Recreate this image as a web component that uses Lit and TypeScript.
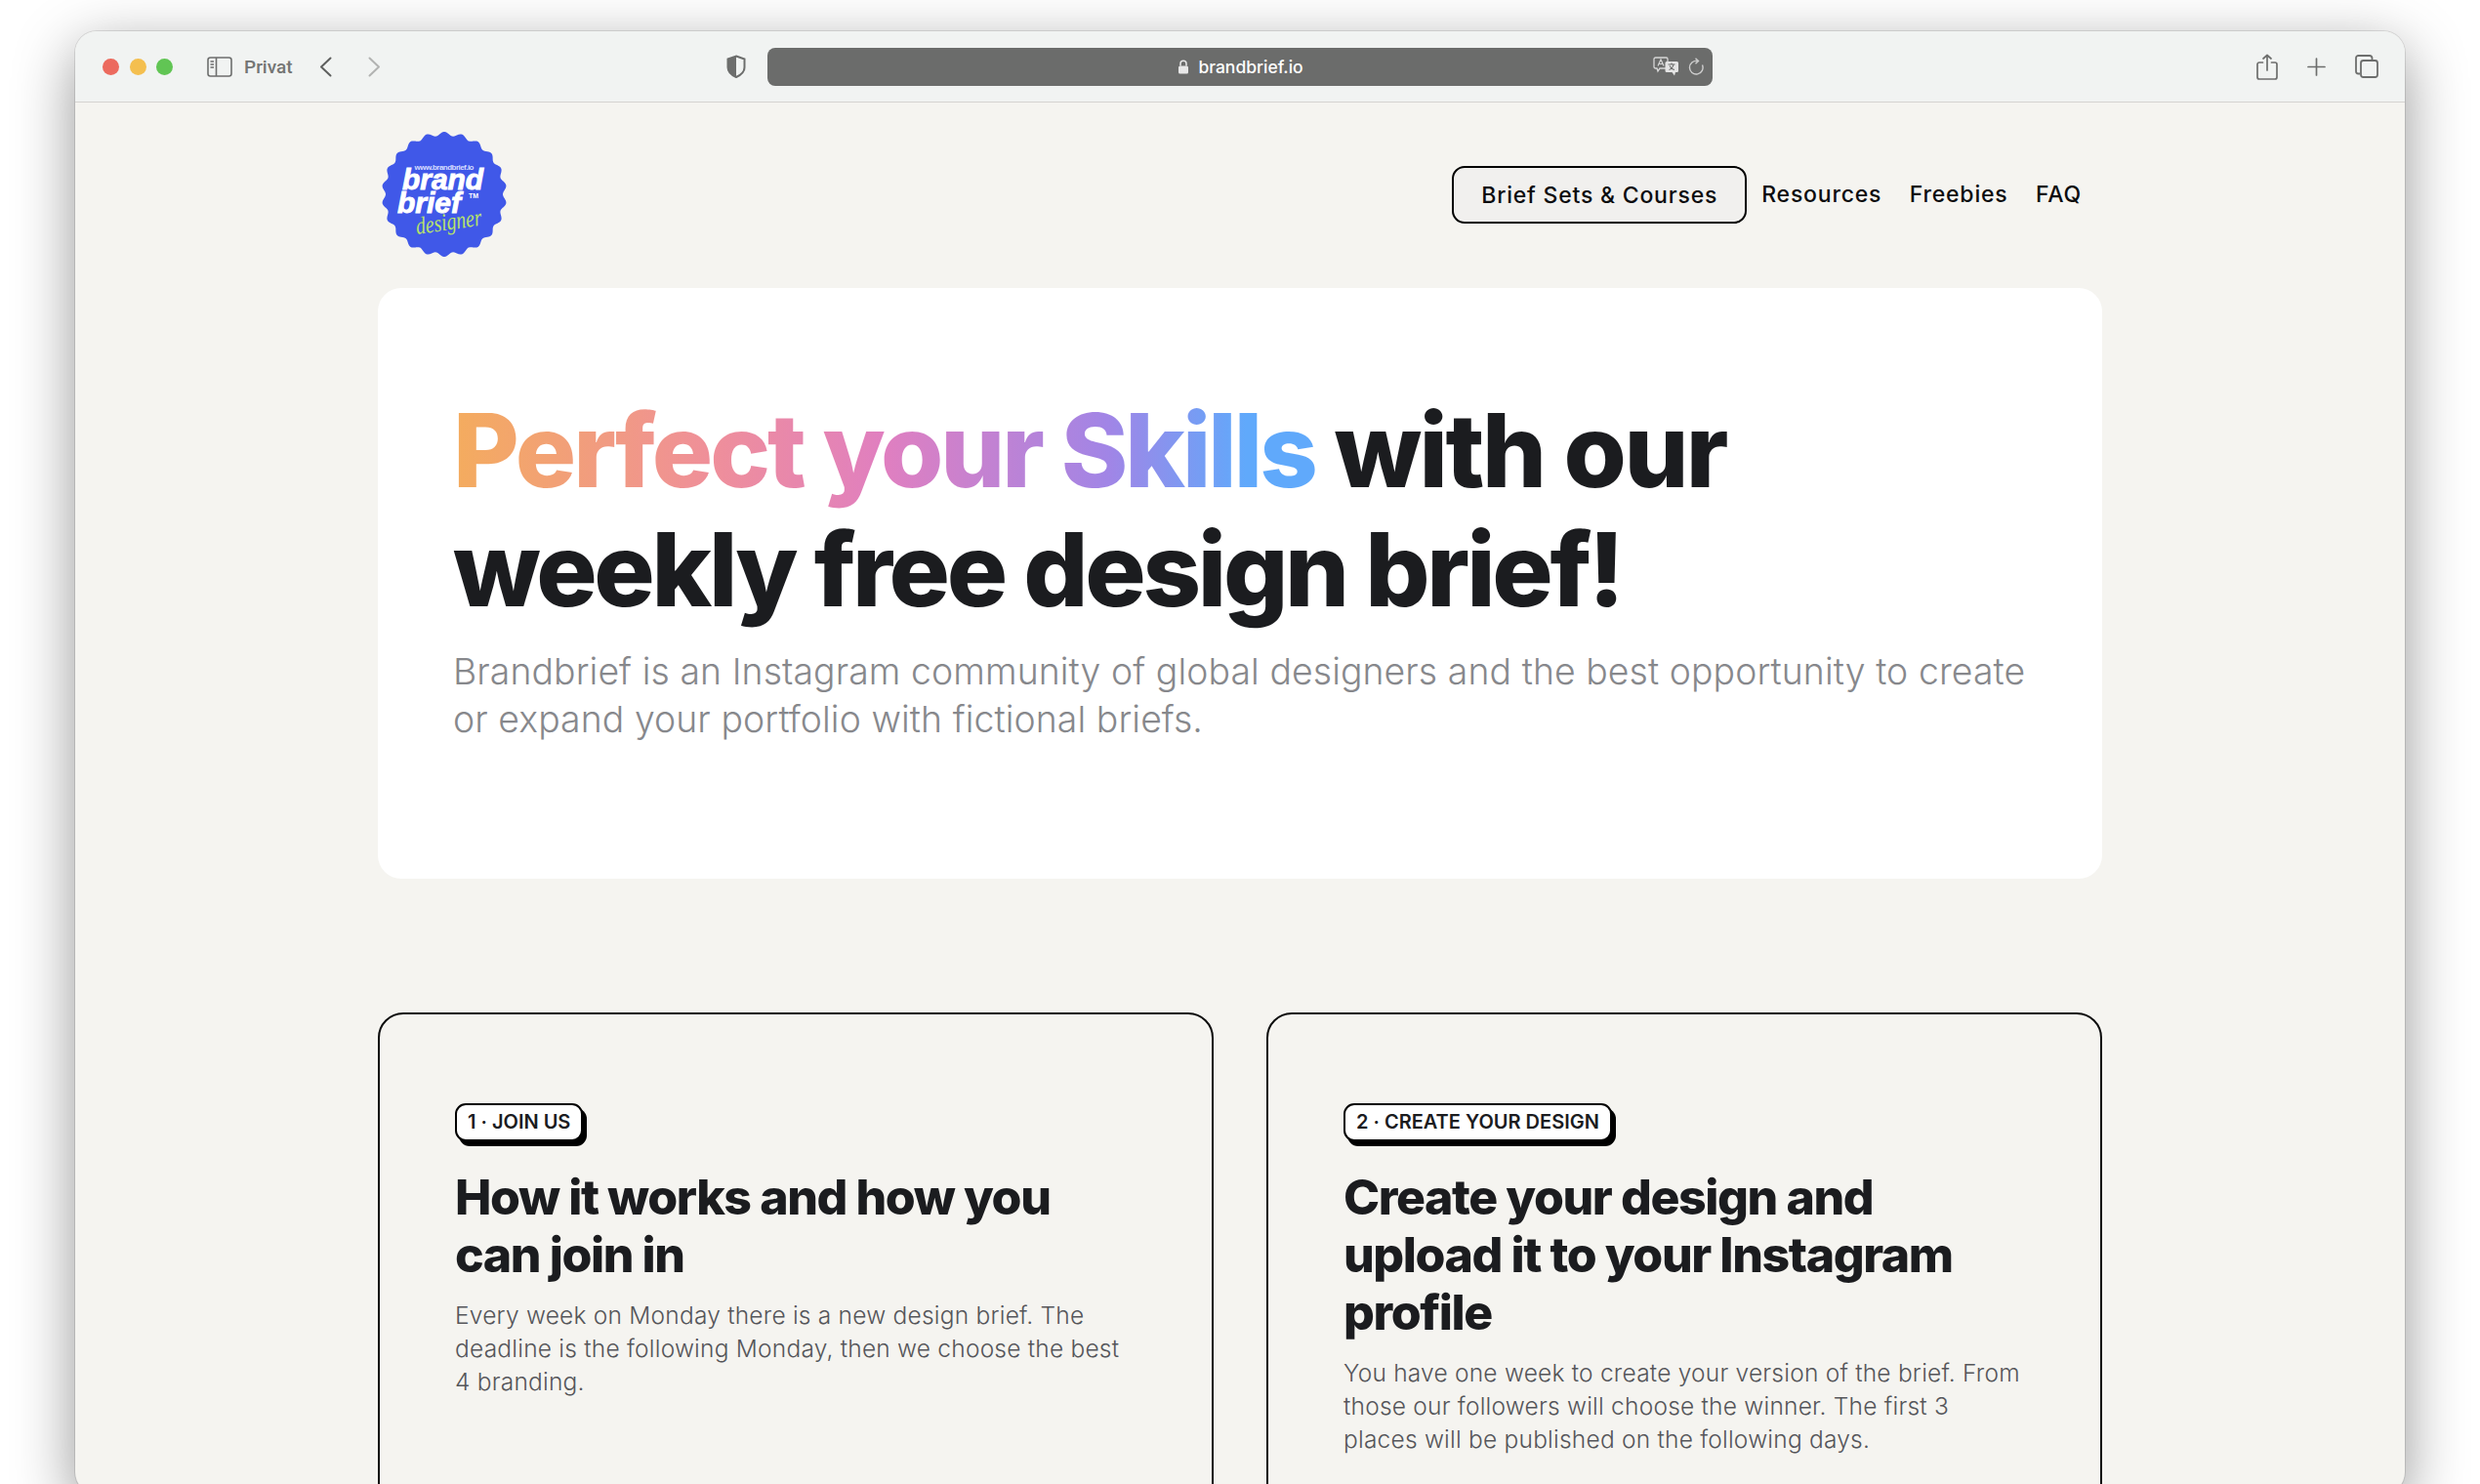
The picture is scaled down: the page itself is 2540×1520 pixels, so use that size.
import { LitElement, html, css, svg } from "lit";
import { customElement } from "lit/decorators.js";

function scallopPath(cx: number, cy: number, r: number, amp: number, n: number) {
  const pts: string[] = [];
  const steps = 720;
  for (let i = 0; i < steps; i++) {
    const t = (i / steps) * Math.PI * 2;
    const rr = r + amp * Math.cos(n * t);
    pts.push(`${(cx + rr * Math.sin(t)).toFixed(2)} ${(cy - rr * Math.cos(t)).toFixed(2)}`);
  }
  return "M" + pts.join("L") + "Z";
}

@customElement("app-root")
export class AppRoot extends LitElement {
  static styles = css`
    :host {
      display: block;
      width: 2540px;
      height: 1520px;
      overflow: hidden;
      background: #fff;
      font-family: Inter, "Liberation Sans", sans-serif;
    }
    .stage { padding: 32px 77px 0 77px; height: 1520px; box-sizing: border-box; }
    .window {
      height: 1498px;
      border-radius: 22px;
      overflow: hidden;
      box-shadow: 0 18px 62px rgba(0,0,0,.42), 0 0 0 1px rgba(0,0,0,.1);
      background: #f5f4f0;
    }
    .toolbar {
      height: 73px;
      box-sizing: border-box;
      background: #f1f3f2;
      border-bottom: 1px solid #d5d3d0;
      display: flex;
      align-items: center;
      padding-left: 28px;
      padding-right: 27px;
      color: #6d6e6d;
    }
    .dot { width: 17px; height: 17px; border-radius: 50%; margin-right: 10.5px; }
    .red { background: #ec6a5e; }
    .yellow { background: #f4bf4f; }
    .green { background: #61c554; }
    .sidebar { margin-left: 24.5px; display: block; }
    .privat { font: 500 19px Roboto, Inter, sans-serif; color: #747574; margin-left: 12px; }
    .back { margin-left: 27px; display: block; }
    .forward { margin-left: 37px; display: block; }
    .shield { margin-left: 354px; display: block; }
    .address {
      margin-left: 22px;
      width: 968px;
      height: 39px;
      background: #6b6c6b;
      border-radius: 8px;
      display: grid;
      grid-template-columns: 1fr auto 1fr;
      align-items: center;
      color: #fff;
      font-size: 17.5px;
      font-weight: 500;
    }
    .url { display: flex; align-items: center; gap: 9px; margin-left: 2px; }
    .addr-right { display: flex; justify-content: flex-end; align-items: center; gap: 9px; padding-right: 9px; }
    .addr-right svg { display: block; }
    .share { margin-left: auto; display: block; }
    .plus { margin-left: 30px; display: block; }
    .tabs { margin-left: 30px; display: block; }

    .content { width: 1766px; margin: 0 auto; }
    .header { height: 190px; display: flex; align-items: flex-start; }
    .logo { display: block; margin-top: 30px; margin-left: 2px; }
    .nav { margin-left: auto; display: flex; align-items: center; margin-top: 65px; padding-right: 21px; font-size: 23px; font-weight: 500; letter-spacing: .8px; color: #0c0c0e; }
    .nav a { margin-left: 28.5px; margin-top: -2px; }
    .nav a.first { margin-left: 15px; }
    .btn {
      width: 302px; height: 59px; box-sizing: border-box;
      border: 2.5px solid #000; border-radius: 13px; background: #f1f0ee;
      display: flex; align-items: center; justify-content: center;
    }
    .hero {
      height: 605px;
      box-sizing: border-box;
      background: #fff;
      border-radius: 24px;
      padding: 105px 77px 0;
    }
    h1 { margin: 0; font-size: 104px; line-height: 122px; font-weight: 800; letter-spacing: -3.03px; color: #1b1c1f; }
    .tight { letter-spacing: -3.3px; }
    .wide { letter-spacing: -2.6px; }
    .grad {
      background: linear-gradient(90deg, #f4ac5e 0%, #ef8f9a 30%, #e07fc0 50%, #a185e6 76%, #60a9fb 92%);
      -webkit-background-clip: text;
      background-clip: text;
      color: transparent;
    }
    .lead { margin: 20px 0 0; font-size: 37.35px; line-height: 48.6px; color: #87888c; font-weight: 300; letter-spacing: .1px; }
    .cards { margin-top: 137px; display: grid; grid-template-columns: 856px 856px; column-gap: 54px; }
    .card {
      height: 600px;
      box-sizing: border-box;
      border: 2.5px solid #0c0c0c;
      border-radius: 26px;
      padding: 91px 76px 0 77px;
    }
    .badge {
      display: inline-block;
      height: 39px;
      line-height: 34px;
      box-sizing: border-box;
      padding: 0 11px;
      background: #fff;
      border: 2.5px solid #000;
      border-radius: 11px;
      box-shadow: 4px 5px 0 #000;
      font-size: 20px;
      font-weight: 600;
      color: #1b1c1f;
      vertical-align: top;
    }
    h2 { margin: 28px 0 0; font-size: 50px; line-height: 59px; font-weight: 800; letter-spacing: -1.42px; color: #1b1c1f; }
    .card p { margin: 15px 0 0; font-size: 24.5px; line-height: 34px; font-weight: 300; letter-spacing: .22px; color: #55565a; }
  `;

  render() {
    return html`
      <div class="stage">
        <div class="window">
          <div class="toolbar">
            <span class="dot red"></span><span class="dot yellow"></span><span class="dot green"></span>
            <svg class="sidebar" width="26" height="21" viewBox="0 0 26 21" fill="none" stroke="#6d6e6d" stroke-width="1.6">
              <rect x="1" y="1" width="24" height="19" rx="2.5"/><path d="M9.5 1v19"/>
              <path d="M3.5 5h3.5M3.5 8h3.5M3.5 11h3.5" stroke-width="1.3"/>
            </svg>
            <span class="privat">Privat</span>
            <svg class="back" width="13" height="21" viewBox="0 0 13 21" fill="none" stroke="#5f605f" stroke-width="2" stroke-linecap="round" stroke-linejoin="round"><path d="M11.5 1.5 2 10.5l9.5 9"/></svg>
            <svg class="forward" width="13" height="21" viewBox="0 0 13 21" fill="none" stroke="#b2b3b2" stroke-width="2" stroke-linecap="round" stroke-linejoin="round"><path d="M1.5 1.5 11 10.5l-9.5 9"/></svg>
            <svg class="shield" width="20" height="24" viewBox="0 0 20 24">
              <path d="M10 1.5 18.5 4.5V13c0 4.5-4 8-8.5 10C5.500 21 1.500 17.500 1.500 13V4.500Z" fill="none" stroke="#6d6e6d" stroke-width="2"/>
              <path d="M10 1.500 1.500 4.500V13c0 4.500 4 8 8.500 10Z" fill="#6d6e6d"/>
            </svg>
            <div class="address">
              <span></span>
              <span class="url">
                <svg width="12" height="15" viewBox="0 0 12 15"><path d="M3 6.500V4.200a3 3 0 0 1 6 0V6.500" fill="none" stroke="#e8e8e8" stroke-width="1.500"/><rect x="1" y="6.500" width="10" height="8" rx="1.500" fill="#e8e8e8"/></svg>
                brandbrief.io
              </span>
              <span class="addr-right">
                <svg width="27" height="20" viewBox="0 0 27 20">
                  <path d="M2.500 1h11a1.500 1.500 0 0 1 1.500 1.500v8A1.500 1.500 0 0 1 13.500 12H7l-2 3-1-3H2.500A1.500 1.500 0 0 1 1 10.500v-8A1.500 1.500 0 0 1 2.500 1Z" fill="none" stroke="#d6d6d6" stroke-width="1.300"/>
                  <path d="M5 9.500 8 3l3 6.500M6 7.500h4" fill="none" stroke="#d6d6d6" stroke-width="1.200"/>
                  <path d="M14 5h10.500A1.500 1.500 0 0 1 26 6.500v8a1.500 1.500 0 0 1-1.500 1.500H23l-1 3.500-2.500-3.500H14a1.500 1.500 0 0 1-1.500-1.500v-8A1.500 1.500 0 0 1 14 5Z" fill="#e4e4e4"/>
                  <path d="M15.500 8h7M19 6.500V8M16.500 13.500c2.500-1 4-3 4.500-5.500M17 9.500c1 2 3 3.500 5 4" fill="none" stroke="#6b6c6b" stroke-width="1.100"/>
                </svg>
                <svg width="16" height="19" viewBox="0 0 16 19" fill="none" stroke="#cfcfcf" stroke-width="1.400"><path d="M9.500 3.500A6.800 6.800 0 1 0 14.500 7.500" /><path d="M7.500 .8 10.500 3.600 7.500 6.300"/></svg>
              </span>
            </div>
            <svg class="share" width="22" height="27" viewBox="0 0 22 27" fill="none" stroke="#6d6e6d" stroke-width="1.700" stroke-linecap="round" stroke-linejoin="round">
              <path d="M6.500 9H3a2 2 0 0 0-2 2v13a2 2 0 0 0 2 2h16a2 2 0 0 0 2-2V11a2 2 0 0 0-2-2h-3.500"/>
              <path d="M11 17V1.500M7 5l4-3.500L15 5"/>
            </svg>
            <svg class="plus" width="19" height="19" viewBox="0 0 19 19" fill="none" stroke="#6d6e6d" stroke-width="1.700" stroke-linecap="round"><path d="M9.500 1v17M1 9.500h17"/></svg>
            <svg class="tabs" width="24" height="24" viewBox="0 0 24 24" fill="none" stroke="#6d6e6d" stroke-width="1.800">
              <path d="M5 19.500H3.500A2.500 2.500 0 0 1 1 17V3.500A2.500 2.500 0 0 1 3.500 1H15a2.500 2.500 0 0 1 2.500 2.500V6"/>
              <rect x="6" y="6" width="17" height="17" rx="2.500"/>
            </svg>
          </div>

          <div class="content">
            <div class="header">
              <svg class="logo" width="132" height="132" viewBox="0 0 132 132">
                <path d="${scallopPath(66, 64, 62, 2, 22)}" fill="#4058e8"/>
                ${svg`
                  <text x="66" y="39" text-anchor="middle" font-family="Liberation Sans" font-size="8" font-weight="700" fill="#d5dcff" textLength="61" lengthAdjust="spacing">www.brandbrief.io</text>
                  <text x="23" y="59" font-family="Liberation Sans" font-size="29" font-weight="700" font-style="italic" fill="#fff" stroke="#fff" stroke-width=".9" textLength="83" lengthAdjust="spacingAndGlyphs">brand</text>
                  <text x="18" y="83" font-family="Liberation Sans" font-size="29" font-weight="700" font-style="italic" fill="#fff" stroke="#fff" stroke-width=".9" textLength="65" lengthAdjust="spacingAndGlyphs">brief</text>
                  <text x="91" y="68" font-family="Liberation Sans" font-size="7" font-weight="700" fill="#fff">TM</text>
                  <text x="0" y="0" transform="translate(38 105) rotate(-8)" font-family="Liberation Serif" font-size="25" font-style="italic" fill="#b7e26a" textLength="68" lengthAdjust="spacingAndGlyphs">designer</text>
                `}
              </svg>
              <nav class="nav">
                <div class="btn">Brief Sets &amp; Courses</div>
                <a class="first">Resources</a>
                <a>Freebies</a>
                <a>FAQ</a>
              </nav>
            </div>

            <section class="hero">
              <h1><span class="grad">Perfect your Skills</span> <span class="wide">with our</span><br /><span class="tight">weekly free design brief!</span></h1>
              <p class="lead">Brandbrief is an Instagram community of global designers and the best opportunity to create<br />or expand your portfolio with fictional briefs.</p>
            </section>

            <section class="cards">
              <article class="card">
                <span class="badge">1 · JOIN US</span>
                <h2>How it works and how you<br />can join in</h2>
                <p>Every week on Monday there is a new design brief. The<br />deadline is the following Monday, then we choose the best<br />4 branding.</p>
              </article>
              <article class="card">
                <span class="badge">2 · CREATE YOUR DESIGN</span>
                <h2>Create your design and<br />upload it to your Instagram<br />profile</h2>
                <p>You have one week to create your version of the brief. From<br />those our followers will choose the winner. The first 3<br />places will be published on the following days.</p>
              </article>
            </section>
          </div>
        </div>
      </div>
    `;
  }
}
